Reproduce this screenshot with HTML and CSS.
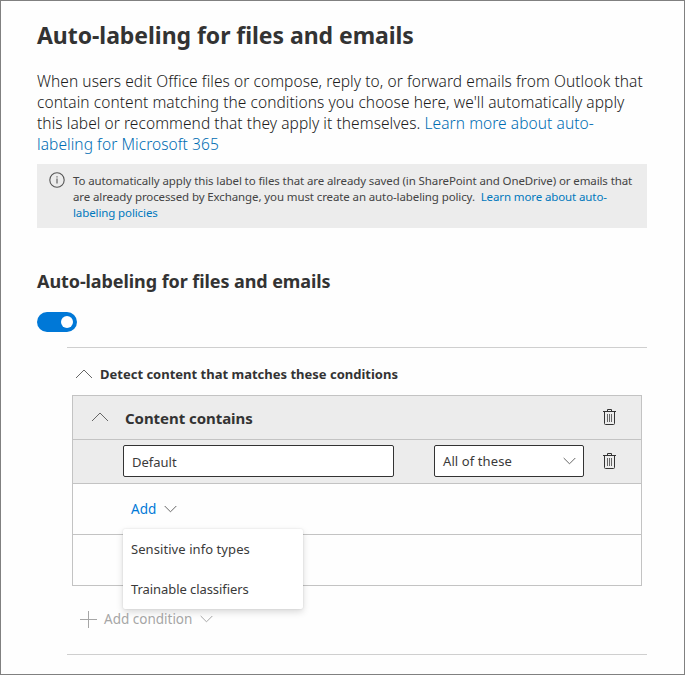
FILE: index.html
```html
<!DOCTYPE html>
<html lang="en">
<head>
<meta charset="utf-8">
<title>Auto-labeling for files and emails</title>
<link rel="stylesheet" href="styles.css">
</head>
<body>
<main class="page">
  <h1 class="title"><span>Auto-labeling for files and emails</span></h1>
  <p class="intro">
    <span class="line">When users edit Office files or compose, reply to, or forward emails from Outlook that</span>
    <span class="line">contain content matching the conditions you choose here, we'll automatically apply</span>
    <span class="line">this label or recommend that they apply it themselves. <a>Learn more about auto-</a></span>
    <span class="line"><a>labeling for Microsoft 365</a></span>
  </p>
  <div class="note">
    <svg class="info" width="16" height="16" viewBox="0 0 16 16"><circle cx="8" cy="8" r="7.2"/><path d="M8 6.5V11.500M8 4.300V5.500"/></svg>
    <p class="note-text">
      <span class="line">To automatically apply this label to files that are already saved (in SharePoint and OneDrive) or emails that</span>
      <span class="line">are already processed by Exchange, you must create an auto-labeling policy. &nbsp;<a>Learn more about auto-</a></span>
      <span class="line"><a>labeling policies</a></span>
    </p>
  </div>
  <h2 class="subtitle"><span>Auto-labeling for files and emails</span></h2>
  <div class="toggle" role="switch" aria-checked="true"><span class="knob"></span></div>

  <section class="conditions">
    <h3 class="detect">
      <svg class="chev" width="18" height="10" viewBox="0 0 18 10"><path d="M1 9L9 1L17 9"/></svg>
      <span>Detect content that matches these conditions</span>
    </h3>
    <div class="panel">
      <div class="row head">
        <svg class="chev" width="18" height="10" viewBox="0 0 18 10"><path d="M1 9L9 1L17 9"/></svg>
        <span class="head-text">Content contains</span>
        <svg class="trash" width="13" height="16" viewBox="0 0 13 16"><path d="M0 2.500H13M4.500 2V.5H8.500V2M1.500 2.500V14.500Q1.500 15.500 2.500 15.500H10.500Q11.500 15.500 11.500 14.500V2.500"/><path class="slats" d="M4.500 5V13M6.500 5V13M8.500 5V13"/></svg>
      </div>
      <div class="row fields">
        <div class="field name"><span>Default</span></div>
        <div class="field pick"><span>All of these</span><svg class="chev" width="13" height="8" viewBox="0 0 13 8"><path d="M.7 1L6.500 6.800L12.300 1"/></svg></div>
        <svg class="trash" width="13" height="16" viewBox="0 0 13 16"><path d="M0 2.500H13M4.500 2V.5H8.500V2M1.500 2.500V14.500Q1.500 15.500 2.500 15.500H10.500Q11.500 15.500 11.500 14.500V2.500"/><path class="slats" d="M4.500 5V13M6.500 5V13M8.500 5V13"/></svg>
      </div>
      <div class="row add">
        <a class="add-link">Add</a>
        <svg class="chev" width="13" height="8" viewBox="0 0 13 8"><path d="M.7 1L6.500 6.800L12.300 1"/></svg>
        <div class="menu">
          <div class="item sensitive"><span>Sensitive info types</span></div>
          <div class="item trainable"><span>Trainable classifiers</span></div>
        </div>
      </div>
      <div class="row last"></div>
    </div>
    <div class="add-condition">
      <svg class="plus" width="17" height="17" viewBox="0 0 17 17"><path d="M8.500 0V17M0 8.500H17"/></svg>
      <span>Add condition</span>
      <svg class="chev" width="13" height="8" viewBox="0 0 13 8"><path d="M.7 1L6.500 6.800L12.300 1"/></svg>
    </div>
  </section>
</main>
</body>
</html>
```
FILE: styles.css
```css
* { box-sizing: border-box; }
body { margin: 0; background: #fff; }
h1, h2, h3, p { margin: 0; }
svg { display: block; flex: none; fill: none; stroke: #333; }
.page {
  width: 685px;
  height: 675px;
  padding: 21px 37px 0 36px;
  border: 1px solid #808080;
  background: #fefefe;
  font-family: "Noto Sans", sans-serif;
  font-size: 13px;
  color: #3a3a3a;
  white-space: nowrap;
  overflow: hidden;
}
a { color: #0078bd; }
h1, h2, h3 { color: #333; }
.title { height: 26px; font-size: 23px; line-height: 26px; font-weight: 700; letter-spacing: -.05px; }
.intro { margin-top: 23px; font-size: 15.500px; line-height: 21px; font-weight: 300; letter-spacing: .065px; color: #1c1c1c; }
.intro a { color: #006db3; }
.line { display: block; }
.note {
  display: flex;
  width: 610px;
  height: 64px;
  margin-top: 9px;
  padding: 8px 0 0 12px;
  background: #ececec;
  font-size: 11.500px;
  line-height: 16px;
  letter-spacing: -.11px;
  color: #444;
}
.note-text { margin-left: 8px; padding-top: 1px; }
.info { stroke: #555; stroke-width: 1.100; }
.subtitle { margin-top: 41px; height: 24px; font-size: 18px; line-height: 24px; font-weight: 700; letter-spacing: -.08px; }
.toggle {
  display: flex;
  justify-content: flex-end;
  align-items: center;
  width: 40px;
  height: 20px;
  margin-top: 19px;
  padding-right: 4px;
  border-radius: 10px;
  background: #0078d7;
}
.knob { width: 12px; height: 12px; border-radius: 50%; background: #fff; }
.conditions {
  width: 580px;
  height: 308px;
  margin: 15px 0 0 30px;
  border-top: 1px solid #cfcfcf;
  border-bottom: 1px solid #cfcfcf;
}
.chev { stroke: #666; stroke-width: 1; }
.detect { display: flex; align-items: center; gap: 7px; height: 47px; padding: 5px 0 0 8px; font-size: 13px; font-weight: 700; }
.panel { width: 570px; margin-left: 5px; border: 1px solid #c3c3c3; border-bottom: 0; }
.row { position: relative; display: flex; align-items: center; height: 44px; border-bottom: 1px solid #c3c3c3; }
.head, .fields { background: #ececec; }
.head { padding: 0 25px 1px 18px; font-size: 15px; font-weight: 700; letter-spacing: -.05px; color: #333; }
.head-text { margin-left: 16px; padding-top: 2px; }
.trash { margin-left: auto; }
.slats { stroke: #666; }
.fields { padding: 0 25px 1px 50px; }
.field { display: flex; align-items: center; height: 32px; border: 1px solid #333; border-radius: 2px; background: #fff; }
.name { width: 271px; padding: 2px 0 0 8px; }
.pick { width: 150px; margin-left: 40px; padding: 0 7px 0 8px; justify-content: space-between; letter-spacing: .1px; }
.add { height: 51px; padding-left: 58px; }
.add-link { color: #0078d7; font-size: 13.500px; }
.add .chev { margin-left: 8px; }
.last { height: 51px; }
.menu {
  position: absolute;
  z-index: 1;
  left: 50px;
  top: 45px;
  width: 180px;
  border-radius: 2px;
  background: #fff;
  box-shadow: 0 3px 7px rgba(0,0,0,.15), 0 0 2px rgba(0,0,0,.12);
}
.item { height: 40px; padding-left: 8px; line-height: 40px; }
.sensitive { letter-spacing: .07px; }
.trainable { letter-spacing: -.07px; }
.add-condition { display: flex; align-items: center; height: 20px; margin-top: 23px; padding-left: 13px; color: #a6a6a6; font-size: 13.500px; }
.add-condition svg { stroke: #a6a6a6; }
.add-condition span { margin: 0 8px 0 7px; }
```
